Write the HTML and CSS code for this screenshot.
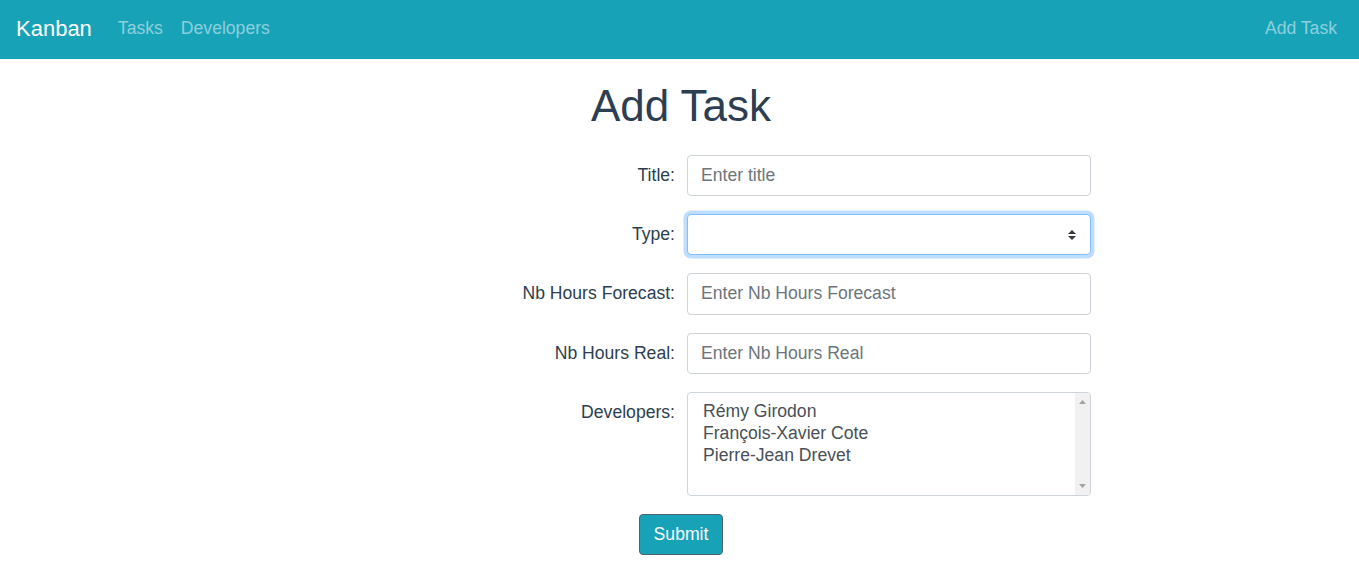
FILE: index.html
```html
<!DOCTYPE html>
<html lang="en">
<head>
<meta charset="utf-8">
<title>Kanban</title>
<link rel="stylesheet" href="styles.css">
</head>
<body>
<nav class="navbar">
  <a class="brand" href="#">Kanban</a>
  <ul class="nav-links">
    <li><a href="#">Tasks</a></li>
    <li><a href="#">Developers</a></li>
  </ul>
  <ul class="nav-links nav-right">
    <li><a href="#">Add Task</a></li>
  </ul>
</nav>
<main class="main">
  <h1 class="title">Add Task</h1>
  <form class="task-form">
    <label class="form-label" for="title">Title:</label>
    <input class="form-control" id="title" type="text" placeholder="Enter title">

    <label class="form-label" for="type">Type:</label>
    <div class="select-wrap">
      <select class="form-control custom-select is-focused" id="type">
        <option value=""></option>
      </select>
      <svg class="select-arrow" width="8" height="10" viewBox="0 0 4 5"><path d="M2 0L0 2h4zm0 5L0 3h4z" fill="#343a40"/></svg>
    </div>

    <label class="form-label" for="forecast">Nb Hours Forecast:</label>
    <input class="form-control" id="forecast" type="text" placeholder="Enter Nb Hours Forecast">

    <label class="form-label" for="real">Nb Hours Real:</label>
    <input class="form-control" id="real" type="text" placeholder="Enter Nb Hours Real">

    <label class="form-label" for="devs">Developers:</label>
    <div class="multi-wrap">
      <select class="form-control multi" id="devs" multiple>
        <option>Rémy Girodon</option>
        <option>François-Xavier Cote</option>
        <option>Pierre-Jean Drevet</option>
      </select>
      <div class="fake-scrollbar">
        <svg width="7" height="4" viewBox="0 0 7 4"><path d="M3.5 0L7 4H0z" fill="#a3a3a3"/></svg>
        <svg width="7" height="4" viewBox="0 0 7 4"><path d="M3.5 4L7 0H0z" fill="#a3a3a3"/></svg>
      </div>
    </div>

    <div class="submit-row">
      <button class="btn-submit" type="button">Submit</button>
    </div>
  </form>
</main>
</body>
</html>
```

FILE: styles.css
```css
* { box-sizing: border-box; }

html, body {
  margin: 0;
  padding: 0;
}

body {
  font-family: "Liberation Sans", Arial, sans-serif;
  font-size: 17.6px;
  color: #2c3e50;
  background: #fff;
}

.navbar {
  height: 59px;
  background: #17a2b8;
  display: flex;
  align-items: center;
  padding: 0 13px 2px 16px;
}

.brand {
  color: #fff;
  font-size: 22px;
  text-decoration: none;
  margin-right: 17px;
  line-height: 1;
}

.nav-links {
  list-style: none;
  margin: 0;
  padding: 0;
  display: flex;
}

.nav-links a {
  display: block;
  padding: 0 9px;
  color: rgba(255, 255, 255, 0.5);
  text-decoration: none;
  font-size: 17.6px;
}

.nav-right {
  margin-left: auto;
}

.main {
  padding-left: 3px;
}

.title {
  margin: 21px 0 0;
  height: 75px;
  text-align: center;
  font-size: 44px;
  font-weight: 400;
  line-height: 1.2;
  color: #2c3e50;
}

.task-form {
  display: grid;
  grid-template-columns: 404px 404px;
  column-gap: 12px;
  row-gap: 18px;
  justify-content: center;
}

.form-label {
  text-align: right;
  line-height: 41px;
  height: 41px;
  color: #2c3e50;
  font-size: 17.6px;
}

.form-control {
  display: block;
  width: 404px;
  height: 41.2px;
  padding: 6px 13px;
  font-family: "Liberation Sans", Arial, sans-serif;
  font-size: 17.6px;
  color: #495057;
  background: #fff;
  border: 1px solid #ced4da;
  border-radius: 4px;
  outline: none;
}

.form-control::placeholder {
  color: #6c757d;
}

.select-wrap {
  position: relative;
  width: 404px;
  height: 41.2px;
}

.custom-select {
  appearance: none;
  -webkit-appearance: none;
}

.is-focused {
  border-color: #80bdff;
  box-shadow: 0 0 0 3.5px rgba(0, 123, 255, 0.25);
}

.select-arrow {
  position: absolute;
  right: 15px;
  top: 16px;
}

.multi-wrap {
  position: relative;
  width: 404px;
  height: 104px;
}

.multi {
  height: 104px;
  padding: 8px 13px 6px;
  color: #495057;
  overflow: hidden;
}

.multi option {
  padding: 0 2px 1px;
  line-height: 21px;
  color: #495057;
}

.fake-scrollbar {
  position: absolute;
  top: 1px;
  right: 1px;
  bottom: 1px;
  width: 15px;
  background: #f1f1f1;
  border-radius: 0 3px 3px 0;
  display: flex;
  flex-direction: column;
  justify-content: space-between;
  align-items: center;
  padding: 7px 0 7px;
}

.submit-row {
  grid-column: 1 / span 2;
  display: flex;
  justify-content: center;
}

.btn-submit {
  width: 84px;
  height: 41px;
  background: #17a2b8;
  color: #fff;
  border: 1px solid #4d6470;
  border-radius: 4px;
  font-family: "Liberation Sans", Arial, sans-serif;
  font-size: 17.6px;
  padding: 0;
}
```
